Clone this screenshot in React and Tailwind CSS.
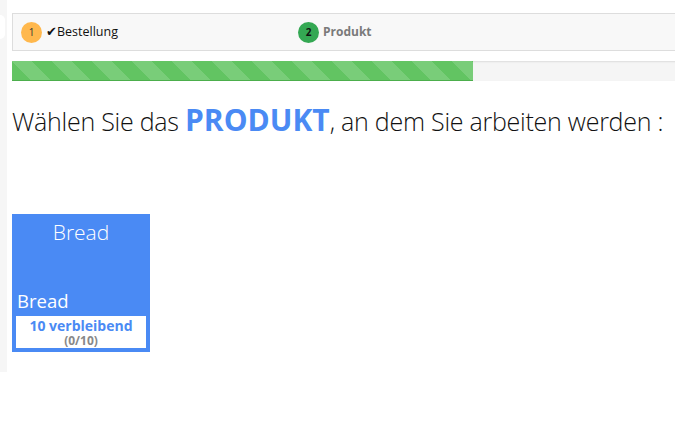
import React from 'react';

const steps = [
  { n: 1, label: 'Bestellung', done: true },
  { n: 2, label: 'Produkt', done: false },
];

const products = [{ name: 'Bread', left: 10, used: 0, total: 10 }];

function StepBar() {
  return (
    <div className="mt-[13px] mr-[-20px] h-[38px] flex items-center border border-[#dddddd] bg-[#f8f8f8] text-[12px]">
      <div className="w-[285px] flex items-center pl-[8px]">
        <span className="w-[21px] h-[21px] rounded-full bg-[#ffb84d] flex items-center justify-center text-[10px] text-[#333]">
          {steps[0].n}
        </span>
        <span className="ml-[4px] text-[13px] text-[#111]">✔</span>
        <span className="text-[12.5px] text-[#111]">{steps[0].label}</span>
      </div>
      <div className="flex items-center">
        <span className="w-[21px] h-[21px] rounded-full bg-[#34a853] flex items-center justify-center text-[10px] font-bold text-[#111]">
          {steps[1].n}
        </span>
        <span className="ml-[4px] font-bold text-[#7a7a7a]">{steps[1].label}</span>
      </div>
    </div>
  );
}

function Progress({ width }) {
  return (
    <div className="mt-[10px] mr-[-20px] h-[20px] bg-[#f5f5f5] shadow-[inset_0_1px_2px_rgba(0,0,0,0.1)] overflow-hidden">
      <div
        className="h-full border-b border-[#4cae4c] bg-[#62c462] bg-[linear-gradient(45deg,rgba(255,255,255,0.15)_25%,transparent_25%,transparent_50%,rgba(255,255,255,0.15)_50%,rgba(255,255,255,0.15)_75%,transparent_75%,transparent)] bg-size-[40px_40px]"
        style={{ width: `${width}px` }}
      />
    </div>
  );
}

function ProductCard({ p }) {
  return (
    <div className="w-[138px] h-[138px] bg-[#4a8af4] p-[4px] flex flex-col text-white">
      <div className="text-center text-[21px] font-light leading-none mt-[4px]">{p.name}</div>
      <div className="mt-auto text-[18.5px] leading-none pl-[1px] mb-[6px]">{p.name}</div>
      <div className="bg-white h-[32px] flex flex-col items-center justify-center">
        <span className="text-[14px] font-bold text-[#4a8af4] leading-[17px]">{p.left} verbleibend</span>
        <span className="text-[12px] font-bold text-[#888] leading-[14px]">({p.used}/{p.total})</span>
      </div>
    </div>
  );
}

export default function App() {
  return (
    <div className="w-[675px] h-[447px] overflow-hidden bg-white flex" style={{ fontFamily: '"Open Sans", "Liberation Sans", sans-serif' }}>
      <div className="w-[7px] h-[372px] bg-[#f6f6f6] shrink-0 pt-[15px]">
        <div className="w-[5px] h-[24px] bg-white rounded-r-full" />
      </div>
      <div className="flex-1 pl-[5px]">
        <StepBar />
        <Progress width={461} />
        <h1 className="mt-[19px] text-[25px] font-light text-[#111] leading-[40px] tracking-[-0.25px] whitespace-nowrap">
          Wählen Sie das <span className="text-[30px] font-bold text-[#4a8af4] tracking-normal">PRODUKT</span>, an dem Sie arbeiten werden :
        </h1>
        <div className="mt-[73px]">
          {products.map((p) => (
            <ProductCard key={p.name} p={p} />
          ))}
        </div>
      </div>
    </div>
  );
}
